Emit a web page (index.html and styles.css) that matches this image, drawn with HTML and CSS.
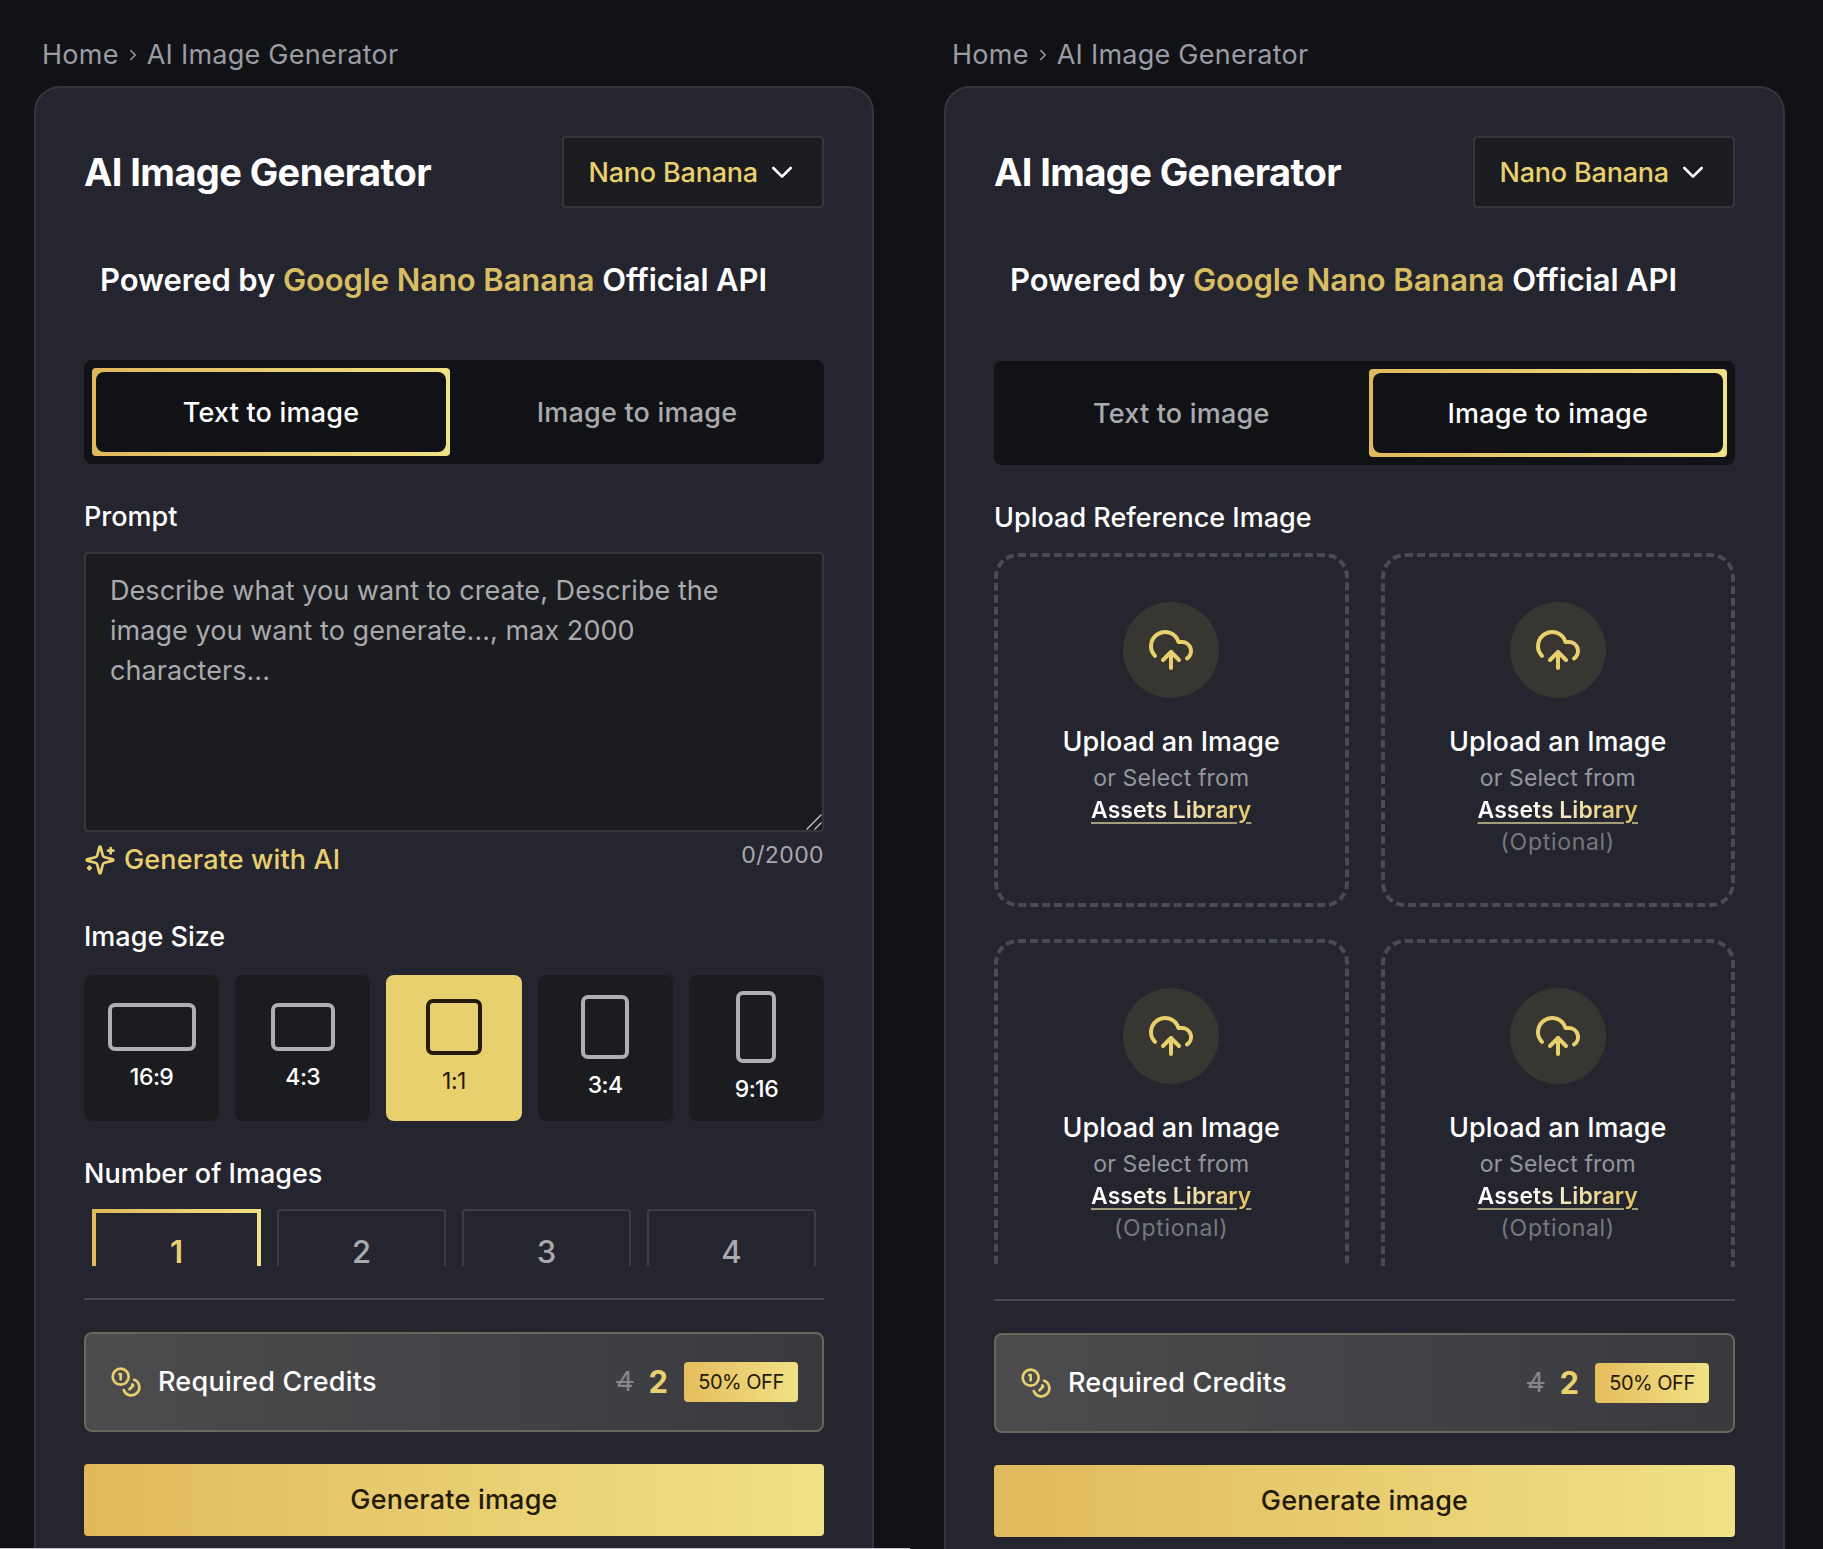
FILE: index.html
```html
<!DOCTYPE html>
<html lang="en">
<head>
    <meta charset="UTF-8">
    <meta name="viewport" content="width=device-width, initial-scale=1.0">
    <title>AI Image Generator</title>
    <link rel="stylesheet" href="styles.css">
</head>
<body>
    <!-- Shared icons -->
    <svg class="sprite" width="0" height="0">
        <symbol id="chevron-down" viewBox="0 0 24 24">
            <path d="m5.5 9 6.5 6.5L18.5 9"/>
        </symbol>
        <symbol id="chevron-right" viewBox="0 0 24 24">
            <path d="m9 18 6-6-6-6"/>
        </symbol>
        <symbol id="cloud-upload" viewBox="0 0 24 24">
            <path d="M12 13v8"/>
            <path d="M4 14.899A7 7 0 1 1 15.71 8h1.79a4.5 4.5 0 0 1 2.5 8.242"/>
            <path d="m8 17 4-4 4 4"/>
        </symbol>
        <symbol id="coins" viewBox="0 0 24 24">
            <circle cx="8" cy="8" r="6"/>
            <path d="M18.09 10.37A6 6 0 1 1 10.34 18"/>
            <path d="M7 6h1v4"/>
            <path d="m16.71 13.88.7.71-2.82 2.82"/>
        </symbol>
        <symbol id="sparkles" viewBox="0 0 24 24">
            <path d="M9.937 15.5A2 2 0 0 0 8.5 14.063l-6.135-1.582a.5.5 0 0 1 0-.962L8.5 9.936A2 2 0 0 0 9.937 8.5l1.582-6.135a.5.5 0 0 1 .963 0L14.063 8.5A2 2 0 0 0 15.5 9.937l6.135 1.581a.5.5 0 0 1 0 .964L15.5 14.063a2 2 0 0 0-1.437 1.437l-1.582 6.135a.5.5 0 0 1-.963 0z"/>
            <path d="M20 3v4"/>
            <path d="M22 5h-4"/>
            <path d="M4 17v2"/>
            <path d="M5 18H3"/>
        </symbol>
    </svg>

    <!-- Text to image -->
    <div class="pane pane-text">
        <nav class="breadcrumb">
            <span>Home</span>
            <svg class="crumb-icon"><use href="#chevron-right"/></svg>
            <span>AI Image Generator</span>
        </nav>
        <div class="card">
            <div class="card-header">
                <h1>AI Image Generator</h1>
                <button class="model-select">
                    <span>Nano Banana</span>
                    <svg class="select-icon"><use href="#chevron-down"/></svg>
                </button>
            </div>
            <p class="powered">Powered by <span class="gold">Google Nano Banana</span> Official API</p>
            <div class="tabs">
                <button class="tab active"><span>Text to image</span></button>
                <button class="tab"><span>Image to image</span></button>
            </div>

            <div class="scroll-area">
                <label class="field-label" for="prompt">Prompt</label>
                <div class="prompt-box">
                    <textarea id="prompt" placeholder="Describe what you want to create, Describe the image you want to generate..., max 2000 characters..."></textarea>
                    <svg class="grip" viewBox="0 0 16 16"><path d="M1 15 15 1M9 15l6-6"/></svg>
                </div>
                <div class="prompt-footer">
                    <a class="ai-link"><svg class="ai-icon"><use href="#sparkles"/></svg><span>Generate with AI</span></a>
                    <span class="counter">0/2000</span>
                </div>

                <div class="field-label size-label">Image Size</div>
                <div class="sizes">
                    <div class="size"><i class="shape wide"></i><span>16:9</span></div>
                    <div class="size"><i class="shape landscape"></i><span>4:3</span></div>
                    <div class="size selected"><i class="shape square"></i><span>1:1</span></div>
                    <div class="size"><i class="shape portrait"></i><span>3:4</span></div>
                    <div class="size"><i class="shape tall"></i><span>9:16</span></div>
                </div>

                <div class="field-label number-label">Number of Images</div>
                <div class="numbers">
                    <div class="number chosen">1</div>
                    <div class="number">2</div>
                    <div class="number">3</div>
                    <div class="number">4</div>
                </div>
            </div>

            <div class="card-footer">
                <div class="credits">
                    <svg class="coins-icon"><use href="#coins"/></svg>
                    <span class="credits-label">Required Credits</span>
                    <s class="old-price">4</s>
                    <b class="price">2</b>
                    <span class="badge">50% OFF</span>
                </div>
                <button class="generate">Generate image</button>
            </div>
        </div>
    </div>

    <!-- Image to image -->
    <div class="pane pane-image">
        <nav class="breadcrumb">
            <span>Home</span>
            <svg class="crumb-icon"><use href="#chevron-right"/></svg>
            <span>AI Image Generator</span>
        </nav>
        <div class="card">
            <div class="card-header">
                <h1>AI Image Generator</h1>
                <button class="model-select">
                    <span>Nano Banana</span>
                    <svg class="select-icon"><use href="#chevron-down"/></svg>
                </button>
            </div>
            <p class="powered">Powered by <span class="gold">Google Nano Banana</span> Official API</p>
            <div class="tabs">
                <button class="tab"><span>Text to image</span></button>
                <button class="tab active"><span>Image to image</span></button>
            </div>

            <div class="scroll-area">
                <div class="field-label upload-label">Upload Reference Image</div>
                <div class="uploads">
                    <div class="upload">
                        <div class="upload-circle"><svg class="upload-icon"><use href="#cloud-upload"/></svg></div>
                        <div class="upload-title">Upload an Image</div>
                        <div class="upload-hint">or Select from</div>
                        <a class="upload-link">Assets Library</a>
                    </div>
                    <div class="upload">
                        <div class="upload-circle"><svg class="upload-icon"><use href="#cloud-upload"/></svg></div>
                        <div class="upload-title">Upload an Image</div>
                        <div class="upload-hint">or Select from</div>
                        <a class="upload-link">Assets Library</a>
                        <div class="upload-hint optional">(Optional)</div>
                    </div>
                    <div class="upload">
                        <div class="upload-circle"><svg class="upload-icon"><use href="#cloud-upload"/></svg></div>
                        <div class="upload-title">Upload an Image</div>
                        <div class="upload-hint">or Select from</div>
                        <a class="upload-link">Assets Library</a>
                        <div class="upload-hint optional">(Optional)</div>
                    </div>
                    <div class="upload">
                        <div class="upload-circle"><svg class="upload-icon"><use href="#cloud-upload"/></svg></div>
                        <div class="upload-title">Upload an Image</div>
                        <div class="upload-hint">or Select from</div>
                        <a class="upload-link">Assets Library</a>
                        <div class="upload-hint optional">(Optional)</div>
                    </div>
                </div>
            </div>

            <div class="card-footer">
                <div class="credits">
                    <svg class="coins-icon"><use href="#coins"/></svg>
                    <span class="credits-label">Required Credits</span>
                    <s class="old-price">4</s>
                    <b class="price">2</b>
                    <span class="badge">50% OFF</span>
                </div>
                <button class="generate">Generate image</button>
            </div>
        </div>
    </div>
</body>
</html>
```
FILE: styles.css
```css
* {
    box-sizing: border-box;
}

body {
    margin: 0;
    height: 1549px;
    display: flex;
    overflow: hidden;
    background: #111216;
    color: #fff;
    font-family: Inter, "Liberation Sans", sans-serif;
    font-size: 27px;
    line-height: 40px;
    white-space: nowrap;
}

button {
    border: none;
    padding: 0;
    background: none;
    color: inherit;
    font: inherit;
    letter-spacing: inherit;
    cursor: pointer;
}

svg {
    display: block;
    flex: none;
    fill: none;
    stroke: currentColor;
    stroke-width: 2;
    stroke-linecap: round;
    stroke-linejoin: round;
}

.sprite {
    position: absolute;
}

.pane {
    width: 910px;
    height: 1549px;
    flex: none;
    padding: 35px 36px 0 34px;
    overflow: hidden;
}

.pane-image {
    width: 911px;
}

.pane-text {
    border-bottom: 1px solid #c4c5cc;
}

.breadcrumb {
    display: flex;
    align-items: center;
    padding-left: 8px;
    margin-bottom: 11px;
    color: #9b9ca3;
    letter-spacing: 0.25px;
}

.crumb-icon {
    width: 18px;
    height: 18px;
    margin: 0 5px;
}

.card {
    height: 1500px;
    padding: 48px;
    background: #24252f;
    border: 2px solid #35363b;
    border-radius: 26px;
}

.card-header {
    display: flex;
    justify-content: space-between;
    align-items: center;
}

h1 {
    margin: 0;
    font-size: 38px;
    font-weight: 700;
    letter-spacing: -0.6px;
}

.model-select {
    display: flex;
    align-items: center;
    gap: 8px;
    height: 72px;
    padding: 0 24px;
    background: #1b1c20;
    border: 2px solid #35363b;
    border-radius: 4px;
    color: #e9d06f;
    font-weight: 500;
    letter-spacing: -0.2px;
}

.model-select span {
    padding-top: 1px;
}

.select-icon {
    width: 32px;
    height: 32px;
    color: #fff;
}

.powered {
    margin: 48px 0 56px;
    padding-left: 16px;
    font-size: 31px;
    font-weight: 600;
    line-height: 48px;
    letter-spacing: -0.1px;
}

.pane-image .powered {
    margin-bottom: 57px;
}

.gold {
    color: #d9bd62;
}

.tabs {
    display: flex;
    gap: 8px;
    height: 104px;
    padding: 8px;
    background: #111216;
    border-radius: 8px;
}

.tab {
    flex: 1;
    padding: 4px;
    border-radius: 4px;
    color: #a9aaae;
    font-weight: 500;
    letter-spacing: 0.2px;
}

.tab span {
    display: flex;
    align-items: center;
    justify-content: center;
    height: 100%;
    padding-top: 1px;
    background: #111216;
    border-radius: 8px;
}

/* gradient frame, the inner corners are rounder than the outer ones */
.tab.active {
    background: linear-gradient(90deg, #e0b95c, #f1e185);
    color: #fff;
}

.scroll-area {
    height: 770px;
    margin-top: 32px;
    overflow: hidden;
}

.field-label {
    display: block;
    margin-bottom: 15px;
    padding-top: 1px;
    font-weight: 500;
}

.prompt-box {
    position: relative;
    height: 280px;
}

textarea {
    display: block;
    width: 100%;
    height: 100%;
    padding: 17px 40px 15px 24px;
    background: #1b1c20;
    border: 2px solid #35363b;
    border-radius: 4px;
    outline: none;
    resize: none;
    overflow: hidden;
    color: #fff;
    font: inherit;
    letter-spacing: 0.05px;
    white-space: pre-wrap;
}

textarea::placeholder {
    color: #a9aaae;
}

.grip {
    position: absolute;
    right: 2px;
    bottom: 2px;
    width: 16px;
    height: 16px;
    stroke: #c9c9cb;
    stroke-width: 1.3;
}

.prompt-footer {
    display: flex;
    justify-content: space-between;
    margin-top: 8px;
}

.ai-link {
    display: flex;
    align-items: center;
    gap: 8px;
    color: #e9d06f;
    font-weight: 500;
    letter-spacing: 0.14px;
}

.ai-icon {
    width: 32px;
    height: 32px;
}

.counter {
    color: #a9aaae;
    font-size: 23px;
    line-height: 31px;
    letter-spacing: 0.4px;
}

.size-label {
    margin: 36px 0 18px;
}

.sizes {
    display: grid;
    grid-template-columns: repeat(5, 1fr);
    gap: 16px;
    height: 146px;
}

.size {
    display: flex;
    flex-direction: column;
    align-items: center;
    justify-content: center;
    gap: 10px;
    background: #1b1c20;
    border-radius: 8px;
    font-size: 23px;
    font-weight: 500;
    line-height: 32px;
    letter-spacing: -0.5px;
}

.shape {
    border: 4px solid #aeafb3;
    border-radius: 7px;
}

.wide {
    width: 88px;
    height: 48px;
}

.landscape {
    width: 64px;
    height: 48px;
}

.square {
    width: 56px;
    height: 56px;
}

.portrait {
    width: 48px;
    height: 64px;
}

.tall {
    width: 40px;
    height: 72px;
}

.selected {
    background: #e9d06f;
    color: #241a08;
    font-weight: 400;
}

.selected .shape {
    border-color: #241a08;
}

.number-label {
    margin-top: 32px;
}

.numbers {
    display: grid;
    grid-template-columns: repeat(4, 1fr);
    gap: 16px;
    padding: 0 8px;
}

.number {
    height: 88px;
    border: 2px solid #3d3e43;
    border-radius: 4px;
    color: #a9aaae;
    font-size: 31px;
    font-weight: 500;
    line-height: 82px;
    text-align: center;
}

.chosen {
    border: 4px solid;
    border-image: linear-gradient(90deg, #e0b95c, #f1e185) 1;
    border-radius: 0;
    color: #e9d06f;
    font-weight: 600;
    line-height: 78px;
}

.card-footer {
    margin-top: 32px;
    padding-top: 32px;
    border-top: 2px solid #47484f;
}

.credits {
    display: flex;
    align-items: center;
    height: 100px;
    padding: 0 24px;
    background: linear-gradient(90deg, #4c4c4e, #3a393e);
    border: 2px solid #69665a;
    border-radius: 8px;
}

.coins-icon {
    width: 32px;
    height: 32px;
    margin-right: 16px;
    color: #e9d06f;
}

.credits-label {
    flex: 1;
    font-weight: 500;
    letter-spacing: 0.24px;
}

.old-price {
    margin-right: 15px;
    color: #85868a;
    text-decoration-thickness: 2px;
}

.price {
    margin-right: 16px;
    color: #e9d06f;
    font-size: 31px;
    font-weight: 700;
}

.badge {
    width: 114px;
    height: 40px;
    background: linear-gradient(90deg, #e5bd5e, #f1e185);
    border-radius: 4px;
    color: #241a08;
    font-size: 20px;
    letter-spacing: -0.5px;
    text-align: center;
}

.generate {
    display: block;
    width: 100%;
    height: 72px;
    margin-top: 32px;
    background: linear-gradient(90deg, #e0b95c, #f1e185);
    border-radius: 4px;
    color: #241a08;
    font-weight: 500;
    letter-spacing: 0.2px;
}

.uploads {
    display: grid;
    grid-template-columns: 1fr 1fr;
    gap: 32px;
}

.upload {
    display: flex;
    flex-direction: column;
    align-items: center;
    height: 354px;
    padding-top: 45px;
    border: 4px dashed #4a4b54;
    border-radius: 24px;
}

.upload-circle {
    display: flex;
    align-items: center;
    justify-content: center;
    width: 96px;
    height: 96px;
    margin-bottom: 24px;
    background: #373631;
    border-radius: 50%;
}

.upload-icon {
    width: 48px;
    height: 48px;
    color: #e9d06f;
}

.upload-title {
    font-weight: 500;
}

.upload-hint,
.upload-link {
    font-size: 23px;
    line-height: 32px;
    letter-spacing: 0.15px;
}

.upload-hint {
    color: #95969b;
}

.upload-link {
    background: linear-gradient(90deg, #fff 25%, #e5c35f);
    -webkit-background-clip: text;
    background-clip: text;
    -webkit-text-fill-color: transparent;
    font-weight: 600;
    letter-spacing: 0;
    text-decoration: underline;
    text-decoration-color: #a39d7c;
    text-decoration-thickness: 2px;
    text-underline-offset: 4px;
}

.optional {
    color: #77787d;
    letter-spacing: 0.7px;
}
```
